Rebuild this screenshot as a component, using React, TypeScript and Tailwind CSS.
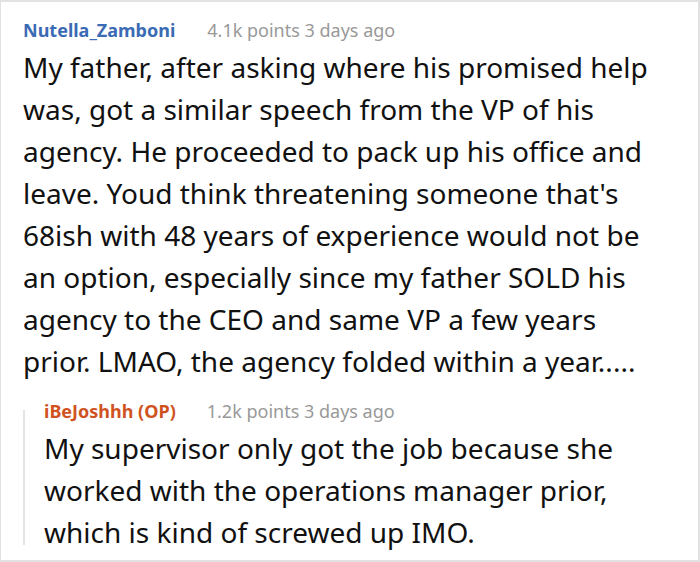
export default function App() {
  return (
    <div
      className="h-[562px] w-[700px] box-border border-t-2 border-r-2 border-b-2 border-l border-[#e2e2e2] bg-white pl-[22px] pr-[33px] pt-[16px] text-black"
      style={{ fontFamily: '"Noto Sans", "Open Sans", sans-serif' }}
    >
      <div className="flex items-baseline gap-[32px] text-[18px] leading-[24px]">
        <span className="font-bold text-[#3a6bb4]">Nutella_Zamboni</span>
        <span className="text-[#999999]">4.1k points 3 days ago</span>
      </div>
      <p className="mt-[4px] text-[28px] leading-[42px] text-[#111111]">
        My father, after asking where his promised help was, got a similar speech from the VP of his agency. He proceeded to pack up his office and leave. Youd think threatening someone that's 68ish with 48 years of experience would not be an option, especially since my father SOLD his agency to the CEO and same VP a few years prior. LMAO, the agency folded within a year.....
      </p>
      <div className="mt-[17px] flex">
        <div className="mt-[11px] mb-[8px] w-[2px] shrink-0 bg-[#e4e4e4]" />
        <div className="pl-[19px]">
          <div className="flex items-baseline gap-[31px] text-[18px] leading-[24px]">
            <span className="font-bold text-[#d0531f]">iBeJoshhh (OP)</span>
            <span className="text-[#999999]">1.2k points 3 days ago</span>
          </div>
          <p className="mt-[4px] text-[28px] leading-[42px] text-[#111111]">
            My supervisor only got the job because she worked with the operations manager prior, which is kind of screwed up IMO.
          </p>
        </div>
      </div>
    </div>
  );
}
